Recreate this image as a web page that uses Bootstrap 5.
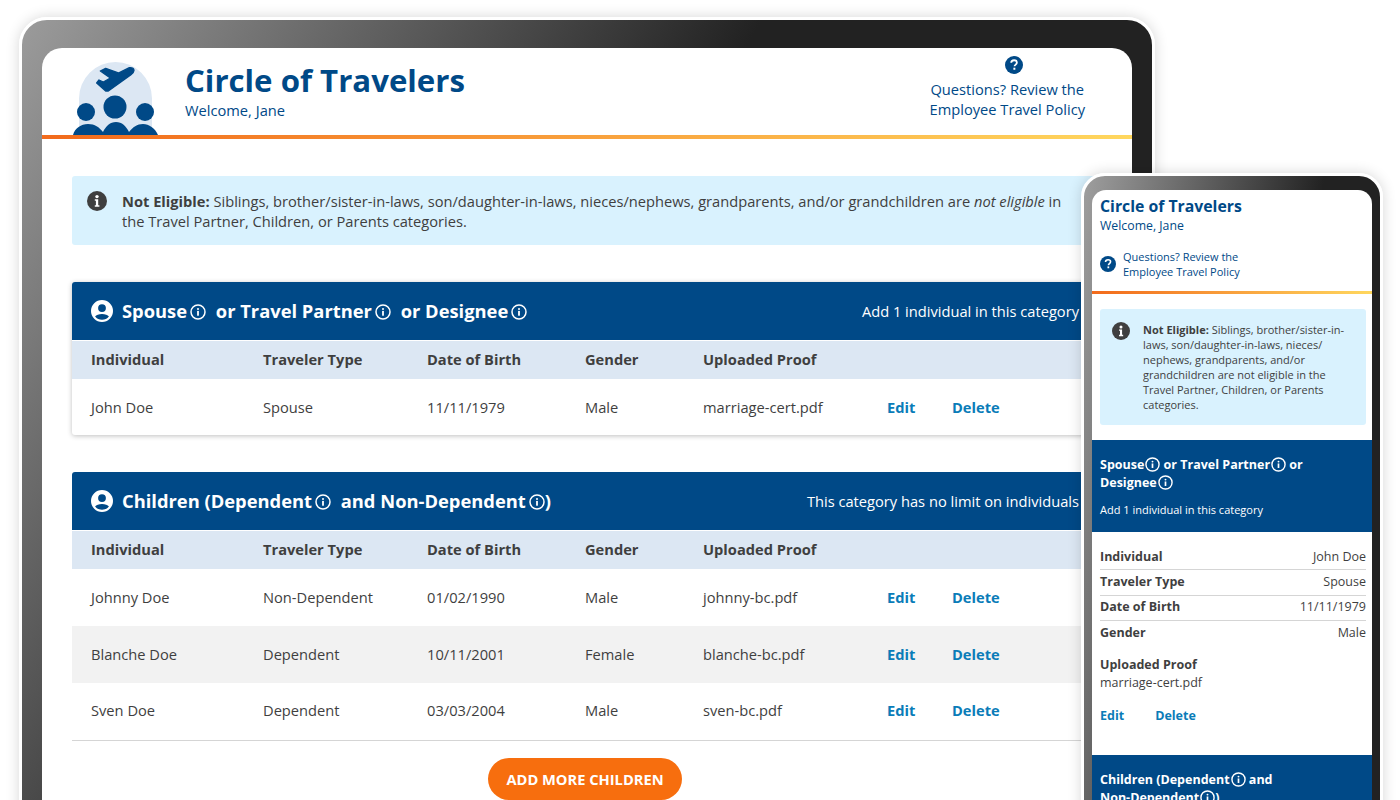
<!doctype html>
<html lang="en">
<head>
  <meta charset="utf-8">
  <title>Circle of Travelers</title>
  <link href="https://cdn.jsdelivr.net/npm/bootstrap@5.3.3/dist/css/bootstrap.min.css" rel="stylesheet">
  <style>
    body { background: #fff; height: 800px; overflow: hidden; position: relative; font-family: "Open Sans", sans-serif; color: #3f3f3f; }

    .device { position: absolute; box-sizing: content-box; border: 3px solid #fff; box-shadow: 0 0 14px rgba(0,0,0,.16); }
    .device-big { left: 19px; top: 17px; width: 1090px; height: 860px; border-radius: 28px; padding: 28px 20px 0; background: linear-gradient(122deg, #9c9c9c 0%, #222 44%, #222 100%); background-origin: border-box; }
    .device-small { left: 1081px; top: 173px; width: 280px; height: 700px; border-radius: 24px; padding: 14px 8px 0; background: linear-gradient(100deg, #a0a0a0 0%, #222 57%); background-origin: border-box; }
    .device-screen { background: #fff; height: 100%; overflow: hidden; }
    .device-big .device-screen { border-radius: 20px 20px 0 0; }
    .device-small .device-screen { border-radius: 14px 14px 0 0; }

    .top-line { height: 4px; background: linear-gradient(90deg, #f26a1b, #ffd75e); }
    .brand-blue { color: #004987; }

    .big-head { height: 87px; padding-left: 30px; padding-right: 47px; }
    .big-logo { width: 88px; height: 75px; display: block; }
    .big-text { margin-left: 25px; }
    .big-title { font-size: 31.2px; font-weight: 700; line-height: 40px; margin: 0; padding-top: 12px; }
    .big-welcome { font-size: 14.67px; line-height: 20px; }
    .big-help { font-size: 14.67px; line-height: 20px; text-align: center; margin-top: 8px; }
    .big-help svg { display: block; margin: 0 auto 5px 75px; }

    .big-body { padding: 37px 30px 0; }
    .note-box { background: #d9f2fe; border-radius: 3px; font-size: 14.67px; line-height: 20px; }
    .big-note { padding: 15px 24px 14px 15px; height: 69px; margin-bottom: 37px; gap: 15px; }
    .note-icon { flex: none; }

    .travel-card { background: #fff; border-radius: 3px; }
    .shadowed { box-shadow: 0 1px 5px rgba(0,0,0,.25); margin-bottom: 37px; }
    .cat-bar { background: #004987; color: #fff; height: 58px; padding: 0 23px 0 18px; border-radius: 3px 3px 0 0; margin-bottom: 1px; }
    .cat-name { font-size: 18.33px; font-weight: 700; line-height: 24px; }
    .cat-limit { font-size: 14.67px; }
    .info-ic { vertical-align: -2px; margin-left: 3px; margin-right: 2px; }
    .cat-gap { margin-left: 3px; }

    .trav-table { width: 100%; table-layout: fixed; border-collapse: collapse; font-size: 14.67px; }
    .trav-table th { background: #dce7f3; font-weight: 700; height: 38px; padding: 0 0 2px 19px; }
    .trav-table td { height: 57px; padding: 0 0 2px 19px; }
    .trav-table .row-short td { height: 56px; padding-bottom: 1px; }
    .trav-table .row-alt td { background: #f2f2f2; }
    .trav-table .act-cell { padding-left: 0; }
    .act-link { color: #0a7cb8; font-weight: 700; text-decoration: none; }
    .last-line { border-bottom: 1px solid #d5d5d5; }

    .add-btn { background: #f76e0e; color: #fff; border: 0; font-size: 14.67px; font-weight: 700; width: 194px; height: 42px; margin-top: 17px; }

    .ph-head { padding: 6px 8px 0; height: 101px; }
    .ph-title { font-size: 15.8px; font-weight: 700; line-height: 20px; margin: 0; }
    .ph-welcome { font-size: 12.3px; line-height: 19px; }
    .ph-help { font-size: 11px; line-height: 15px; margin-top: 14px; gap: 7px; }
    .ph-note { margin: 15px 6px 15px 8px; padding: 13px 16px 13px 12px; font-size: 11px; line-height: 15px; gap: 13px; }
    .ph-bar { background: #004987; color: #fff; padding: 16px 30px 15px 8px; }
    .ph-name { font-size: 12.5px; font-weight: 700; line-height: 17.5px; }
    .ph-limit { font-size: 11px; line-height: 15px; margin-top: 11px; }
    .ph-info { vertical-align: -3px; margin-left: 1px; }
    .ph-body { padding: 13px 6px 0 8px; font-size: 12.5px; height: 223px; }
    .ph-row { height: 25.3px; border-bottom: 1px solid #d5d5d5; }
    .ph-row-end { border-bottom: 0; }
    .ph-proof { margin-top: 10px; line-height: 17.5px; }
    .ph-acts { margin-top: 16px; gap: 31px; }
    .strong-label { font-weight: 700; }
  </style>
</head>
<body>

<svg width="0" height="0" class="position-absolute">
  <defs>
    <symbol id="ic-info" viewBox="0 0 16 16">
      <circle cx="8" cy="8" r="7" fill="none" stroke="currentColor" stroke-width="1.5"/>
      <circle cx="8" cy="4.9" r="1" fill="currentColor"/>
      <rect x="7.1" y="6.9" width="1.8" height="4.8" fill="currentColor"/>
    </symbol>
    <symbol id="ic-info-solid" viewBox="0 0 20 20">
      <circle cx="10" cy="10" r="10" fill="currentColor"/>
      <circle cx="10" cy="5.6" r="1.7" fill="#fff"/>
      <path d="M7.8 8.2h3.4v6h1.2v1.6H7.8v-1.6h1.1V9.8H7.8z" fill="#fff"/>
    </symbol>
    <symbol id="ic-help" viewBox="0 0 20 20">
      <circle cx="10" cy="10" r="10" fill="currentColor"/>
      <path d="M6.9 7.6c0-1.8 1.4-2.9 3.2-2.9s3.1 1 3.1 2.6c0 2.2-2.6 2.3-2.6 4.2" fill="none" stroke="#fff" stroke-width="2"/>
      <rect x="9.3" y="13" width="2.2" height="2.3" fill="#fff"/>
    </symbol>
    <symbol id="ic-person" viewBox="0 0 24 24">
      <path fill="currentColor" fill-rule="evenodd" d="M12 1a11 11 0 1 0 0 22 11 11 0 0 0 0-22zm0 4.2a3.9 3.9 0 1 1 0 7.8 3.9 3.9 0 0 1 0-7.8zm0 15.6a8.8 8.8 0 0 1-6.9-3.3c.9-1.6 3.900-2.500 6.900-2.500s6 .9 6.900 2.500A8.800 8.800 0 0 1 12 20.800z"/>
    </symbol>
  </defs>
</svg>

<!-- big screen -->
<div class="device device-big">
  <div class="device-screen">
    <div class="big-head d-flex align-items-end">
      <svg class="big-logo" viewBox="0 0 88 75" aria-hidden="true">
        <path fill="#dce7f3" d="M7 75V38.500a36.500 36.500 0 0 1 73 0V75z"/>
        <g fill="#004987">
          <path transform="translate(13 -2) scale(.3333)" stroke="#004987" stroke-width="4" stroke-linejoin="round" d="M46 39 62 31 100 45 133 29Q146 28 147 37 146 45 138 50L70 99 62 99 35 75 42 66 55 72 76 60Z"/>
          <circle cx="14" cy="52" r="9"/>
          <circle cx="43" cy="47" r="11.500"/>
          <circle cx="73" cy="52" r="9"/>
          <path d="M1 75C3 68 9 64 16 64s11 3 15 8c3-6 7-10 13-10s10 4 13 10c4-5 8-8 14-8s12 4 15 11z"/>
        </g>
      </svg>
      <div class="big-text align-self-start flex-grow-1 brand-blue">
        <h1 class="big-title">Circle of Travelers</h1>
        <div class="big-welcome">Welcome, Jane</div>
      </div>
      <div class="big-help align-self-start brand-blue">
        <svg width="18" height="18"><use href="#ic-help"/></svg>
        Questions? Review the<br>Employee Travel Policy
      </div>
    </div>
    <div class="top-line"></div>

    <div class="big-body">
      <div class="note-box big-note d-flex">
        <svg class="note-icon" width="20" height="20"><use href="#ic-info-solid"/></svg>
        <div><b>Not Eligible:</b> Siblings, brother/sister-in-laws, son/daughter-in-laws, nieces/nephews, grandparents, and/or grandchildren are <i>not eligible</i> in the Travel Partner, Children, or Parents categories.</div>
      </div>

      <div class="travel-card shadowed">
        <div class="cat-bar d-flex align-items-center">
          <svg class="me-2" width="24" height="24"><use href="#ic-person"/></svg>
          <div class="cat-name flex-grow-1">
            Spouse<svg class="info-ic" width="16" height="16"><use href="#ic-info"/></svg>
            <span class="cat-gap">or Travel Partner</span><svg class="info-ic" width="16" height="16"><use href="#ic-info"/></svg>
            <span class="cat-gap">or Designee</span><svg class="info-ic" width="16" height="16"><use href="#ic-info"/></svg>
          </div>
          <div class="cat-limit">Add 1 individual in this category</div>
        </div>
        <table class="trav-table">
          <colgroup><col style="width:172px"><col style="width:164px"><col style="width:158px"><col style="width:118px"><col style="width:203px"><col style="width:65px"><col></colgroup>
          <thead><tr><th>Individual</th><th>Traveler Type</th><th>Date of Birth</th><th>Gender</th><th>Uploaded Proof</th><th></th><th></th></tr></thead>
          <tbody>
            <tr class="row-short"><td>John Doe</td><td>Spouse</td><td>11/11/1979</td><td>Male</td><td>marriage-cert.pdf</td><td class="act-cell"><a class="act-link" href="#">Edit</a></td><td class="act-cell"><a class="act-link" href="#">Delete</a></td></tr>
          </tbody>
        </table>
      </div>

      <div class="travel-card">
        <div class="cat-bar d-flex align-items-center">
          <svg class="me-2" width="24" height="24"><use href="#ic-person"/></svg>
          <div class="cat-name flex-grow-1">
            Children (Dependent<svg class="info-ic" width="16" height="16"><use href="#ic-info"/></svg>
            <span class="cat-gap">and Non-Dependent</span><svg class="info-ic me-0" width="16" height="16"><use href="#ic-info"/></svg>)
          </div>
          <div class="cat-limit">This category has no limit on individuals</div>
        </div>
        <table class="trav-table">
          <colgroup><col style="width:172px"><col style="width:164px"><col style="width:158px"><col style="width:118px"><col style="width:203px"><col style="width:65px"><col></colgroup>
          <thead><tr><th>Individual</th><th>Traveler Type</th><th>Date of Birth</th><th>Gender</th><th>Uploaded Proof</th><th></th><th></th></tr></thead>
          <tbody>
            <tr><td>Johnny Doe</td><td>Non-Dependent</td><td>01/02/1990</td><td>Male</td><td>johnny-bc.pdf</td><td class="act-cell"><a class="act-link" href="#">Edit</a></td><td class="act-cell"><a class="act-link" href="#">Delete</a></td></tr>
            <tr class="row-alt"><td>Blanche Doe</td><td>Dependent</td><td>10/11/2001</td><td>Female</td><td>blanche-bc.pdf</td><td class="act-cell"><a class="act-link" href="#">Edit</a></td><td class="act-cell"><a class="act-link" href="#">Delete</a></td></tr>
            <tr class="last-line"><td>Sven Doe</td><td>Dependent</td><td>03/03/2004</td><td>Male</td><td>sven-bc.pdf</td><td class="act-cell"><a class="act-link" href="#">Edit</a></td><td class="act-cell"><a class="act-link" href="#">Delete</a></td></tr>
          </tbody>
        </table>
        <div class="d-flex" style="padding-left:416px">
          <button type="button" class="btn add-btn rounded-pill text-uppercase p-0">Add more children</button>
        </div>
      </div>
    </div>
  </div>
</div>

<!-- phone -->
<div class="device device-small">
  <div class="device-screen">
    <div class="ph-head brand-blue">
      <h2 class="ph-title">Circle of Travelers</h2>
      <div class="ph-welcome">Welcome, Jane</div>
      <div class="ph-help d-flex align-items-center">
        <svg width="16" height="16"><use href="#ic-help"/></svg>
        <div>Questions? Review the<br>Employee Travel Policy</div>
      </div>
    </div>
    <div class="top-line" style="height:3px"></div>

    <div class="note-box ph-note d-flex">
      <svg class="note-icon" width="18" height="18"><use href="#ic-info-solid"/></svg>
      <div><b>Not Eligible:</b> Siblings, brother/sister-in-laws, son/daughter-in-laws, nieces/ nephews, grandparents, and/or grandchildren are not eligible in the Travel Partner, Children, or Parents categories.</div>
    </div>

    <div class="ph-bar">
      <div class="ph-name">Spouse<svg class="ph-info" width="15" height="15"><use href="#ic-info"/></svg> or Travel Partner<svg class="ph-info" width="15" height="15"><use href="#ic-info"/></svg> or Designee<svg class="ph-info" width="15" height="15"><use href="#ic-info"/></svg></div>
      <div class="ph-limit">Add 1 individual in this category</div>
    </div>
    <div class="ph-body">
      <div class="ph-row d-flex justify-content-between align-items-center"><span class="strong-label">Individual</span><span>John Doe</span></div>
      <div class="ph-row d-flex justify-content-between align-items-center"><span class="strong-label">Traveler Type</span><span>Spouse</span></div>
      <div class="ph-row d-flex justify-content-between align-items-center"><span class="strong-label">Date of Birth</span><span>11/11/1979</span></div>
      <div class="ph-row ph-row-end d-flex justify-content-between align-items-center"><span class="strong-label">Gender</span><span>Male</span></div>
      <div class="ph-proof"><div class="strong-label">Uploaded Proof</div><div>marriage-cert.pdf</div></div>
      <div class="ph-acts d-flex"><a class="act-link" href="#">Edit</a><a class="act-link" href="#">Delete</a></div>
    </div>
    <div class="ph-bar">
      <div class="ph-name">Children (Dependent<svg class="ph-info" width="15" height="15"><use href="#ic-info"/></svg> and <span class="text-nowrap">Non-Dependent<svg class="ph-info" width="15" height="15"><use href="#ic-info"/></svg>)</span></div>
    </div>
  </div>
</div>

<script src="https://cdn.jsdelivr.net/npm/bootstrap@5.3.3/dist/js/bootstrap.bundle.min.js"></script>
</body>
</html>
